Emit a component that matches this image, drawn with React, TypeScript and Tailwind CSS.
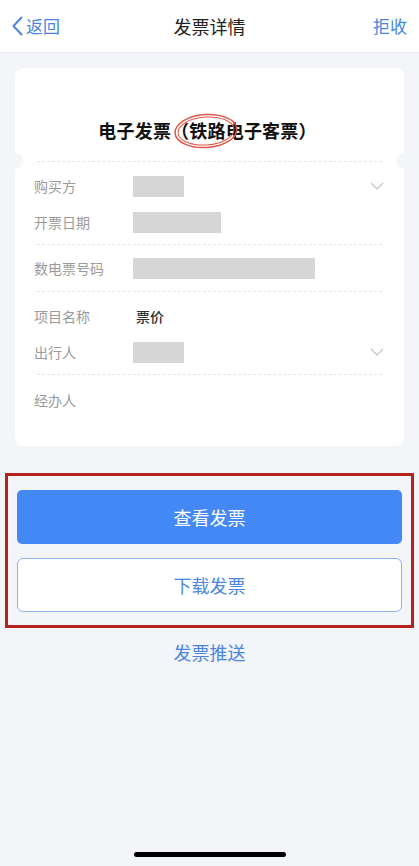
import React from "react";

const font = { fontFamily: '"PingFang SC","Noto Sans CJK SC","Noto Sans",sans-serif' };

function Chevron() {
  return (
    <svg width="14" height="8" viewBox="0 0 14 8" className="shrink-0">
      <path d="M1 1 L7 7 L13 1" fill="none" stroke="#c8c8cc" strokeWidth="1.3" />
    </svg>
  );
}

function Dash() {
  return <div className="mx-[22px] border-t border-dashed border-[#e6e6e6]" />;
}

function Row({ label, children, chevron, h = 36 }: { label: string; children?: React.ReactNode; chevron?: boolean; h?: number }) {
  return (
    <div className="flex items-center pl-[19px] pr-[20px]" style={{ height: h }}>
      <div className="w-[99px] text-[14px] text-[#9a9a9a]">{label}</div>
      <div className="flex-1 flex items-center">{children}</div>
      {chevron && <Chevron />}
    </div>
  );
}

function Box({ w }: { w: number }) {
  return <div className="h-[21px] bg-[#d6d6d6]" style={{ width: w }} />;
}

export default function App() {
  return (
    <div className="w-[419px] h-[866px] bg-[#f4f5f9] relative overflow-hidden" style={font}>
      {/* header */}
      <div className="h-[53px] bg-white border-b border-[#e8e9ee] flex items-center justify-between px-[12px]">
        <div className="flex items-center gap-[3px] text-[#4a86e0] text-[17px] w-[80px]">
          <svg width="11" height="20" viewBox="0 0 11 20">
            <path d="M9.5 1.5 L1.5 10 L9.5 18.5" fill="none" stroke="#4a86e0" strokeWidth="2" strokeLinecap="round" strokeLinejoin="round" />
          </svg>
          <span>返回</span>
        </div>
        <div className="text-[18px] text-[#222]">发票详情</div>
        <div className="w-[80px] text-right text-[#4a86e0] text-[17px]">拒收</div>
      </div>

      {/* card */}
      <div className="mx-[15px] mt-[15px] bg-white rounded-[8px] relative pb-[16px]">
        <div className="h-[93px] flex items-end justify-center pb-[17px]">
          <div className="relative text-[18px] font-bold text-[#111] tracking-[0.2px] ml-[-4px]">
            电子发票（铁路电子客票）
            <svg className="absolute left-[75px] top-[-5px]" width="66" height="38" viewBox="0 0 66 38">
              <ellipse cx="33" cy="19" rx="31" ry="16.5" fill="none" stroke="#e0574a" strokeWidth="1.5" transform="rotate(-4 33 19)" />
              <ellipse cx="33" cy="19" rx="28" ry="14" fill="none" stroke="#e0574a" strokeWidth="1" transform="rotate(-4 33 19)" />
            </svg>
          </div>
        </div>
        {/* notches */}
        <div className="absolute left-[-8px] top-[85px] w-[16px] h-[16px] rounded-full bg-[#f4f5f9]" />
        <div className="absolute right-[-8px] top-[85px] w-[16px] h-[16px] rounded-full bg-[#f4f5f9]" />
        <Dash />
        <div className="pt-[6px]">
          <Row label="购买方" chevron><Box w={51} /></Row>
          <Row label="开票日期"><Box w={88} /></Row>
        </div>
        <div className="mt-[4px]"><Dash /></div>
        <div className="py-[5px]">
          <Row label="数电票号码"><Box w={182} /></Row>
        </div>
        <Dash />
        <div className="pt-[6px]">
          <Row label="项目名称"><span className="ml-[3px] text-[14px] text-[#333] font-medium">票价</span></Row>
          <Row label="出行人" chevron><Box w={51} /></Row>
        </div>
        <div className="mt-[4px]"><Dash /></div>
        <div className="pt-[7px] pb-[12px]">
          <Row label="经办人" />
        </div>
      </div>

      {/* buttons */}
      <div className="mx-[5px] mt-[27px] border-[3px] border-[#b5231d] px-[9px] pt-[14px] pb-[13px] flex flex-col gap-[14px]">
        <div className="h-[54px] rounded-[5px] bg-[#4488f5] flex items-center justify-center text-white text-[18px]">查看发票</div>
        <div className="h-[54px] rounded-[6px] bg-white border border-[#8fb3ee] flex items-center justify-center text-[#4a86e0] text-[18px]">下载发票</div>
      </div>
      <div className="mt-[11px] text-center text-[#4a86e0] text-[18px]">发票推送</div>

      {/* home indicator */}
      <div className="absolute left-[134px] bottom-[9px] w-[152px] h-[5px] rounded-full bg-black" />
    </div>
  );
}
